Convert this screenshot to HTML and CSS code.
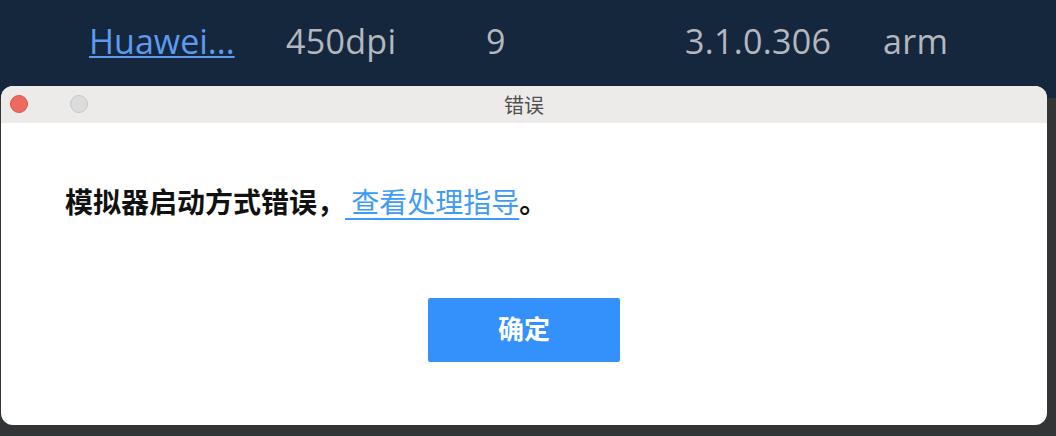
FILE: index.html
```html
<!DOCTYPE html>
<html lang="zh-CN">
<head>
<meta charset="utf-8">
<title>错误</title>
<link rel="stylesheet" href="styles.css">
</head>
<body>
<div class="screen">
  <div class="table-row">
    <a class="cell link" href="#">Huawei...</a>
    <span class="cell">450dpi</span>
    <span class="cell">9</span>
    <span class="cell">3.1.0.306</span>
    <span class="cell">arm</span>
  </div>
  <div class="backdrop"></div>

  <div class="dialog">
    <div class="titlebar">
      <div class="lights">
        <span class="light close"></span>
        <span class="light mini"></span>
      </div>
      <div class="title">错误</div>
    </div>
    <div class="body">
      <p class="message">模拟器启动方式错误，<a class="guide" href="#"> 查看处理指导</a>。</p>
      <button class="ok" type="button">确定</button>
    </div>
  </div>
</div>
</body>
</html>
```
FILE: styles.css
```css
html, body {
  margin: 0;
  padding: 0;
}
body {
  width: 1056px;
  height: 436px;
  overflow: hidden;
  background: #333436;
}
.screen {
  position: relative;
  width: 1056px;
  height: 436px;
  display: flex;
  flex-direction: column;
}
.table-row {
  height: 98px;
  box-sizing: border-box;
  background: #15273d;
  padding: 21px 0 0 89px;
  display: grid;
  grid-template-columns: 197px 200px 199px 198px auto;
  align-items: start;
  font-family: "Open Sans", "DejaVu Sans", sans-serif;
  font-size: 34px;
  letter-spacing: 0.3px;
  line-height: 40px;
  color: #b4b8be;
}
.cell {
  white-space: nowrap;
}
.link {
  color: #5d9af0;
  letter-spacing: 0;
  text-decoration: underline;
  text-decoration-thickness: 2px;
  text-underline-offset: 2px;
}
.backdrop {
  flex: 1;
  background: #333436;
}
.dialog {
  position: absolute;
  left: 1px;
  top: 86px;
  width: 1046px;
  height: 339px;
  border-radius: 12px;
  overflow: hidden;
  background: #ffffff;
  display: flex;
  flex-direction: column;
}
.titlebar {
  height: 37px;
  background: #ecebe9;
  position: relative;
  display: flex;
  align-items: center;
  justify-content: center;
}
.lights {
  position: absolute;
  left: 9px;
  top: 9px;
  display: flex;
  gap: 42px;
}
.light {
  width: 18px;
  height: 18px;
  border-radius: 50%;
  box-sizing: border-box;
}
.close {
  background: #ed6a5e;
  border: 1px solid #d9574c;
}
.mini {
  background: #dcdcdc;
  border: 1px solid #c6c6c6;
}
.title {
  font-family: "Noto Sans CJK SC", sans-serif;
  font-size: 20px;
  color: #4f4f4f;
  line-height: 37px;
}
.body {
  flex: 1;
  display: flex;
  flex-direction: column;
  align-items: center;
  padding-top: 58px;
}
.message {
  align-self: stretch;
  margin: 0;
  padding-left: 64px;
  font-family: "Noto Sans CJK SC", sans-serif;
  font-size: 28px;
  line-height: 40px;
  font-weight: 700;
  color: #111111;
  white-space: nowrap;
}
.guide {
  font-weight: 400;
  color: #3f9bf6;
  text-decoration: underline;
  text-decoration-thickness: 2px;
  text-underline-offset: 5px;
}
.ok {
  margin-top: 77px;
  width: 192px;
  height: 64px;
  border: none;
  border-radius: 2px;
  background: #3491fb;
  color: #ffffff;
  font-family: "Noto Sans CJK SC", sans-serif;
  font-size: 26px;
  font-weight: 700;
  padding: 0 0 5px 0;
}
```
